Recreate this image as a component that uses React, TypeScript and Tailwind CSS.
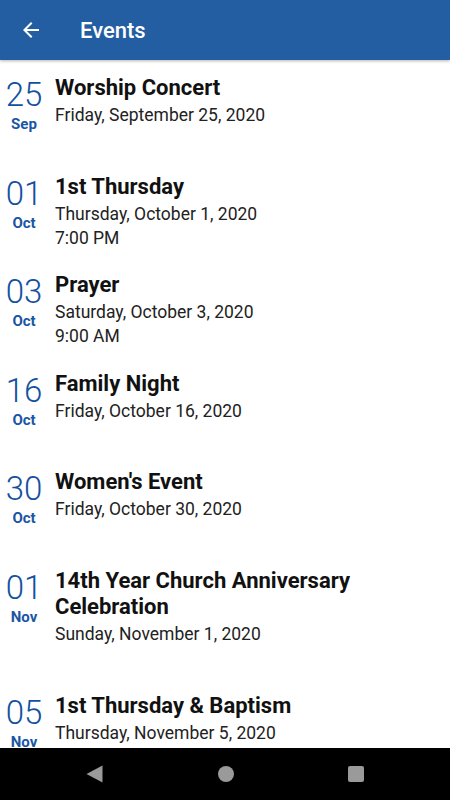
const events = [
  { day: "25", month: "Sep", title: "Worship Concert", date: "Friday, September 25, 2020", time: "" },
  { day: "01", month: "Oct", title: "1st Thursday", date: "Thursday, October 1, 2020", time: "7:00 PM" },
  { day: "03", month: "Oct", title: "Prayer", date: "Saturday, October 3, 2020", time: "9:00 AM" },
  { day: "16", month: "Oct", title: "Family Night", date: "Friday, October 16, 2020", time: "" },
  { day: "30", month: "Oct", title: "Women's Event", date: "Friday, October 30, 2020", time: "" },
  { day: "01", month: "Nov", title: "14th Year Church Anniversary Celebration", date: "Sunday, November 1, 2020", time: "" },
  { day: "05", month: "Nov", title: "1st Thursday & Baptism", date: "Thursday, November 5, 2020", time: "" },
];

const EventRow = ({ e }: { e: (typeof events)[number] }) => (
  <div className="flex pt-[15px] pb-[7.6px]">
    <div className="w-[48px] shrink-0 flex flex-col items-center">
      <span className="text-[33px] leading-[40px] font-light text-[#1450a0]">{e.day}</span>
      <span className="text-[15px] leading-[18px] font-bold text-[#1a56a3]">{e.month}</span>
    </div>
    <div className="ml-[7px] pr-[70px] flex flex-col">
      <span className="text-[22px] leading-[26px] font-bold text-[#111]">{e.title}</span>
      <span className="mt-[2px] text-[17.5px] leading-[24px] text-[#222]">{e.date}</span>
      <span className="text-[17.5px] leading-[24px] text-[#222]">{e.time || "\u00a0"}</span>
    </div>
  </div>
);

export default function App() {
  return (
    <div className="w-[450px] h-[800px] flex flex-col bg-white overflow-hidden" style={{ fontFamily: "Roboto, 'Liberation Sans', sans-serif" }}>
      <header className="h-[60px] shrink-0 bg-[#235ea2] flex items-center shadow-[0_1px_3px_rgba(0,0,0,0.3)] z-10">
        <svg className="ml-[19px]" width="24" height="24" viewBox="0 0 24 24" fill="white">
          <path d="M20 11H7.83l5.59-5.59L12 4l-8 8 8 8 1.41-1.41L7.83 13H20v-2z" />
        </svg>
        <h1 className="ml-[37px] text-[22px] font-medium text-white">Events</h1>
      </header>
      <main className="flex-1 overflow-hidden">
        {events.map((e, i) => (
          <EventRow key={i} e={e} />
        ))}
      </main>
      <nav className="h-[52px] shrink-0 bg-black flex items-center justify-between px-[86px]">
        <svg width="17" height="18" viewBox="0 0 17 18">
          <path d="M16.5 0.5 V17.5 L0.5 9 Z" fill="#9a9a9a" />
        </svg>
        <div className="w-[16px] h-[16px] rounded-full bg-[#9a9a9a]" />
        <div className="w-[16px] h-[16px] rounded-[2px] bg-[#9a9a9a]" />
      </nav>
    </div>
  );
}
